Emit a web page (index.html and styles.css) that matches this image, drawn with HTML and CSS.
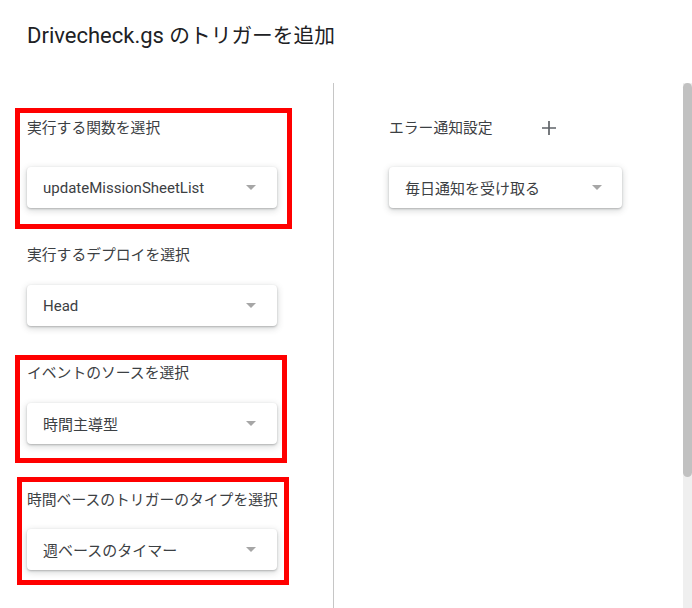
FILE: index.html
```html
<!DOCTYPE html>
<html lang="ja">
<head>
<meta charset="utf-8">
<title>Drivecheck.gs のトリガーを追加</title>
<link rel="stylesheet" href="styles.css">
</head>
<body>
<h1 class="title">Drivecheck.gs <span class="ja">のトリガーを追加</span></h1>
<div class="main">
  <div class="col-left">
    <div class="field f1">
      <div class="label">実行する関数を選択</div>
      <div class="select"><span>updateMissionSheetList</span><i class="arrow"></i></div>
      <div class="mark m1"></div>
    </div>
    <div class="field f2">
      <div class="label">実行するデプロイを選択</div>
      <div class="select"><span>Head</span><i class="arrow"></i></div>
    </div>
    <div class="field f3">
      <div class="label">イベントのソースを選択</div>
      <div class="select"><span>時間主導型</span><i class="arrow"></i></div>
      <div class="mark m3"></div>
    </div>
    <div class="field f4">
      <div class="label">時間ベースのトリガーのタイプを選択</div>
      <div class="select"><span>週ベースのタイマー</span><i class="arrow"></i></div>
      <div class="mark m4"></div>
    </div>
  </div>
  <div class="col-right">
    <div class="field f1 fr">
      <div class="label-row">
        <div class="label">エラー通知設定</div>
        <svg class="plus" width="16" height="16" viewBox="0 0 16 16"><path d="M8 1v14M1 8h14" stroke="#5f6368" stroke-width="1.7" fill="none"/></svg>
      </div>
      <div class="select"><span>毎日通知を受け取る</span><i class="arrow"></i></div>
    </div>
  </div>
  <div class="scrollbar"><div class="thumb"></div></div>
</div>
</body>
</html>
```

FILE: styles.css
```css
html, body {
  margin: 0;
  padding: 0;
  background: #ffffff;
}
body {
  width: 692px;
  height: 608px;
  overflow: hidden;
  font-family: Roboto, "Noto Sans CJK JP", sans-serif;
  color: #3c4043;
}
.title {
  margin: 0;
  padding: 22px 0 0 27px;
  height: 83px;
  box-sizing: border-box;
  font-size: 22px;
  line-height: 28px;
  font-weight: 400;
  color: #202124;
}
.title .ja {
  font-size: 20.7px;
}
.main {
  display: flex;
  height: 525px;
}
.col-left {
  width: 306px;
  padding: 35px 0 0 27px;
  border-right: 1px solid #c6c6c6;
  flex: none;
}
.col-right {
  flex: 1;
  padding: 35px 0 0 55px;
}
.field {
  position: relative;
  width: 250px;
}
.label {
  font-size: 14.8px;
  line-height: 20px;
  color: #3c4043;
  white-space: nowrap;
}
.label-row {
  display: flex;
  align-items: center;
}
.label-row .label {
  width: 152px;
}
.plus {
  display: block;
}
.select {
  height: 41px;
  background: #fff;
  border-radius: 4px;
  box-shadow: 0 1px 2px rgba(60, 64, 67, 0.3), 0 2px 6px 1px rgba(60, 64, 67, 0.18);
  display: flex;
  align-items: center;
  justify-content: space-between;
  padding: 0 21px 0 16px;
  font-size: 15px;
  color: #3c4043;
}
.arrow {
  width: 0;
  height: 0;
  border-left: 5.5px solid transparent;
  border-right: 5.5px solid transparent;
  border-top: 5.5px solid #a6a6a6;
}
.f1 .select { margin-top: 29px; }
.f2 { margin-top: 37px; }
.f2 .select { margin-top: 20px; }
.f3 { margin-top: 37px; }
.f3 .select { margin-top: 20px; }
.f4 { margin-top: 46px; }
.f4 .select { margin-top: 19px; }
.fr { width: 233px; }
.fr .select { padding-right: 20px; }
.mark {
  position: absolute;
  border: 5px solid #ff0000;
  box-sizing: border-box;
  pointer-events: none;
}
.m1 { left: -12px; top: -10px; width: 277px; height: 121px; }
.m3 { left: -12px; top: -8px; width: 272px; height: 108px; }
.m4 { left: -10px; top: -13px; width: 272px; height: 108px; }
.scrollbar {
  width: 9px;
  flex: none;
  background: #efefef;
}
.thumb {
  height: 394px;
  background: #c1c1c1;
  border-radius: 4.5px;
}
```
